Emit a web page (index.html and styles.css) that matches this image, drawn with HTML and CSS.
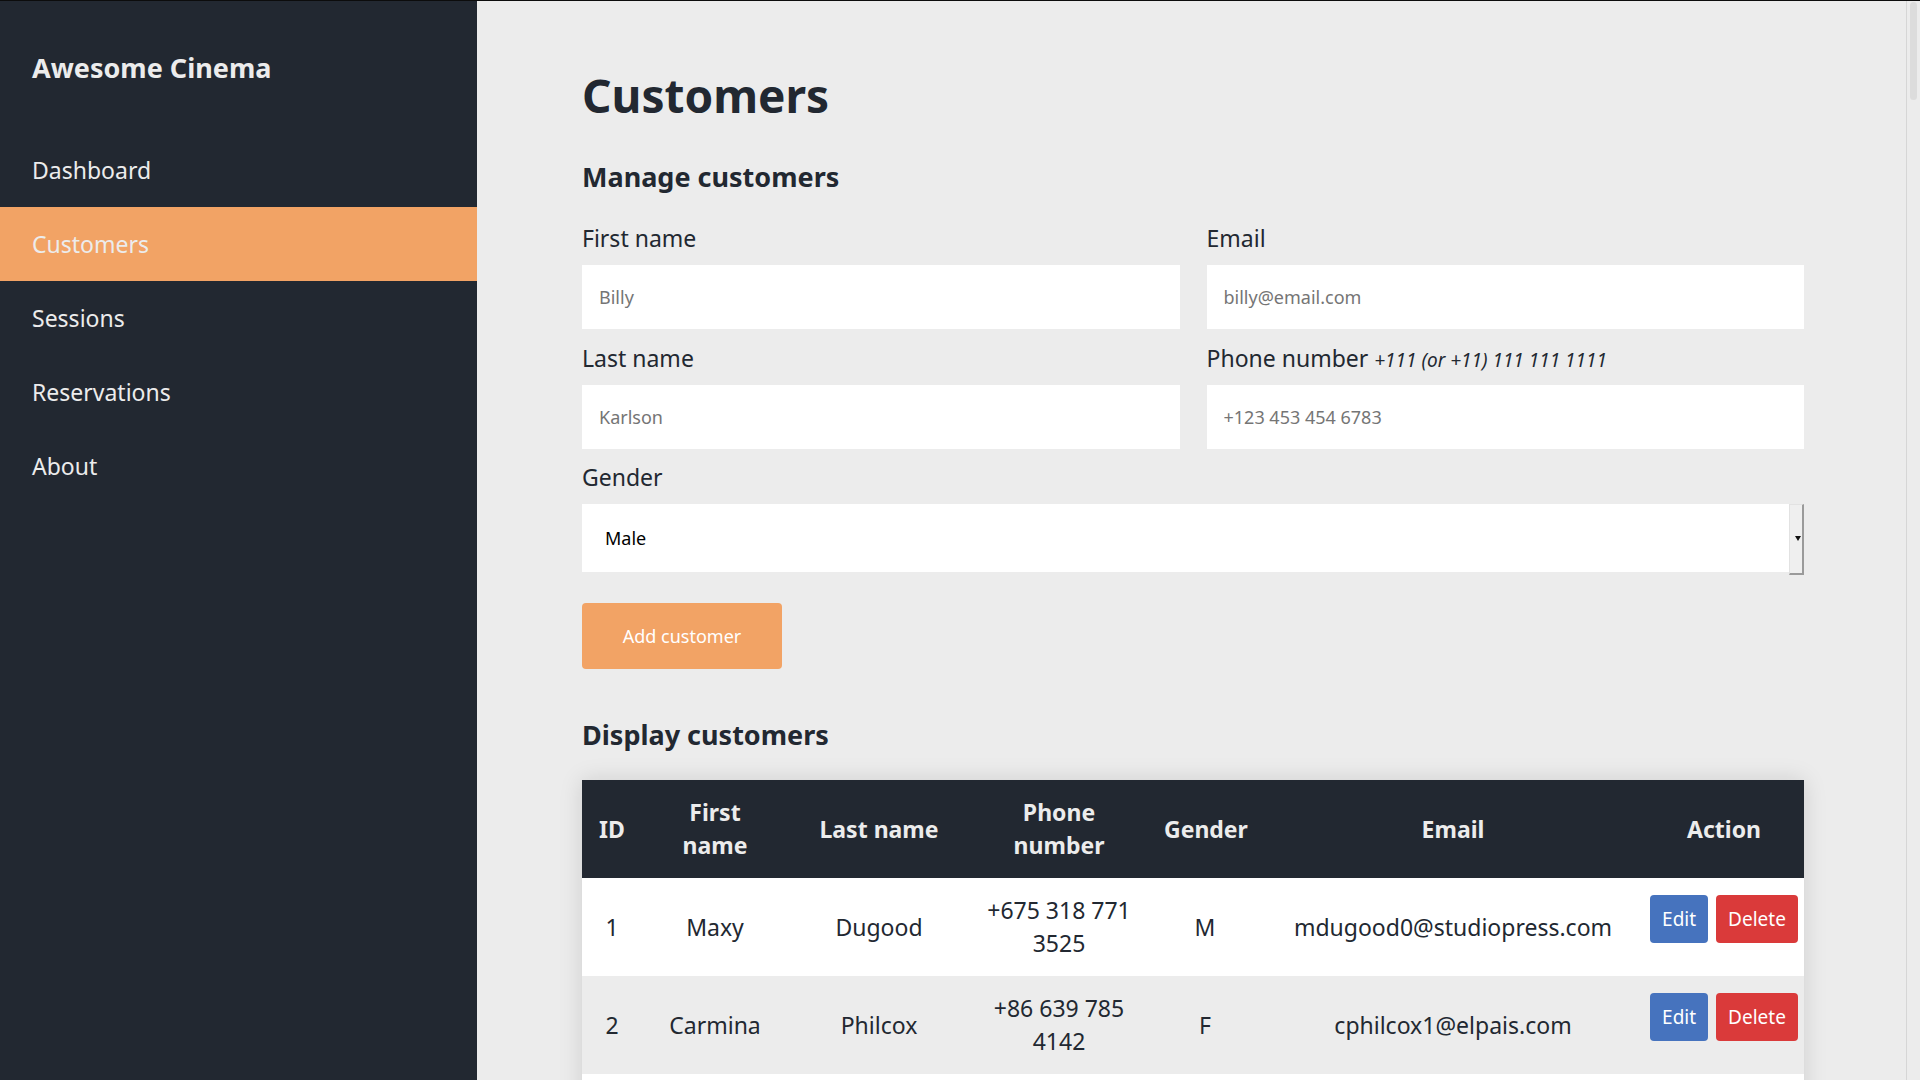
FILE: index.html
```html
<!DOCTYPE html>
<html lang="en">
<head>
<meta charset="utf-8">
<title>Awesome Cinema - Customers</title>
<link rel="stylesheet" href="styles.css">
</head>
<body>
<div class="app">
  <aside class="sidebar">
    <div class="brand">Awesome Cinema</div>
    <nav class="nav">
      <a href="#" class="nav-item">Dashboard</a>
      <a href="#" class="nav-item active">Customers</a>
      <a href="#" class="nav-item">Sessions</a>
      <a href="#" class="nav-item">Reservations</a>
      <a href="#" class="nav-item">About</a>
    </nav>
  </aside>
  <main class="main">
    <h1 class="page-title">Customers</h1>
    <h2 class="section-title">Manage customers</h2>
    <form class="form">
      <div class="field">
        <label class="label" for="fn">First name</label>
        <input class="input" id="fn" type="text" placeholder="Billy">
      </div>
      <div class="field">
        <label class="label" for="em">Email</label>
        <input class="input" id="em" type="email" placeholder="billy@email.com">
      </div>
      <div class="field">
        <label class="label" for="ln">Last name</label>
        <input class="input" id="ln" type="text" placeholder="Karlson">
      </div>
      <div class="field">
        <label class="label" for="ph">Phone number <span class="hint">+111 (or +11) 111 111 1111</span></label>
        <input class="input" id="ph" type="tel" placeholder="+123 453 454 6783">
      </div>
      <div class="field field-wide">
        <label class="label" for="gd">Gender</label>
        <div class="select-wrap">
          <select class="select" id="gd">
            <option>Male</option>
            <option>Female</option>
          </select>
        </div>
      </div>
    </form>
    <button class="btn-primary" type="button">Add customer</button>
    <h2 class="section-title section-display">Display customers</h2>
    <table class="table">
      <colgroup>
        <col class="c-id"><col class="c-first"><col class="c-last"><col class="c-phone"><col class="c-gender"><col class="c-email"><col class="c-action">
      </colgroup>
      <thead>
        <tr><th>ID</th><th>First name</th><th>Last name</th><th>Phone number</th><th>Gender</th><th>Email</th><th>Action</th></tr>
      </thead>
      <tbody>
        <tr><td>1</td><td>Maxy</td><td>Dugood</td><td>+675 318 771 3525</td><td>M</td><td>mdugood0@studiopress.com</td><td class="actions"><div class="btns"><button class="btn btn-edit" type="button">Edit</button><button class="btn btn-delete" type="button">Delete</button></div></td></tr>
        <tr><td>2</td><td>Carmina</td><td>Philcox</td><td>+86 639 785 4142</td><td>F</td><td>cphilcox1@elpais.com</td><td class="actions"><div class="btns"><button class="btn btn-edit" type="button">Edit</button><button class="btn btn-delete" type="button">Delete</button></div></td></tr>
        <tr><td>3</td><td>Rafael</td><td>Ornelas</td><td>+33 512 604 2218</td><td>M</td><td>rornelas2@wired.com</td><td class="actions"><div class="btns"><button class="btn btn-edit" type="button">Edit</button><button class="btn btn-delete" type="button">Delete</button></div></td></tr>
      </tbody>
    </table>
  </main>
  <div class="scrollbar"><div class="thumb"></div></div>
</div>
</body>
</html>
```

FILE: styles.css
```css
* { box-sizing: border-box; }

html, body {
  margin: 0;
  padding: 0;
  height: 100%;
}

body {
  font-family: "Noto Sans", "Open Sans", sans-serif;
  color: #222831;
  background: #ececec;
  overflow: hidden;
}

.app {
  display: flex;
  height: 100vh;
  border-top: 1px solid #0c0c0c;
  overflow: hidden;
}

.sidebar {
  width: 477px;
  flex-shrink: 0;
  background: #222831;
  padding-top: 48px;
}

.brand {
  font-size: 27px;
  line-height: 38px;
  font-weight: 700;
  color: #ececec;
  padding-left: 32px;
  margin-bottom: 46px;
}

.nav {
  display: flex;
  flex-direction: column;
}

.nav-item {
  display: block;
  height: 74px;
  line-height: 74px;
  padding-left: 32px;
  font-size: 23px;
  color: #ececec;
  text-decoration: none;
}

.nav-item.active {
  background: #f2a365;
}

.main {
  flex: 1;
  min-width: 0;
  background: #ececec;
  padding: 66px 102px 0 105px;
  overflow: hidden;
}

.page-title {
  margin: 0 0 36px;
  font-size: 46px;
  line-height: 56px;
  font-weight: 700;
  color: #222831;
}

.section-title {
  margin: 0 0 28px;
  font-size: 27px;
  line-height: 36px;
  font-weight: 700;
  color: #222831;
}

.section-display {
  margin-top: 48px;
  margin-bottom: 27px;
}

.form {
  display: grid;
  grid-template-columns: 1fr 1fr;
  column-gap: 27px;
  row-gap: 14px;
}

.field-wide {
  grid-column: 1 / span 2;
  margin-top: -1px;
}

.label {
  display: block;
  height: 30px;
  font-size: 23px;
  line-height: 30px;
  margin-bottom: 12px;
  color: #222831;
  white-space: nowrap;
}

.hint {
  font-size: 19px;
  line-height: 1;
  font-style: italic;
}

.input {
  display: block;
  width: 100%;
  height: 64px;
  border: none;
  outline: none;
  background: #fff;
  padding: 0 17px;
  font-family: inherit;
  font-size: 18px;
  color: #222831;
}

.input::placeholder {
  color: #757575;
}

.select-wrap {
  position: relative;
}

.select {
  display: block;
  width: 100%;
  height: 68px;
  border: none;
  outline: none;
  background: #fff;
  -webkit-appearance: none;
  appearance: none;
  padding: 0 23px;
  font-family: inherit;
  font-size: 18px;
  color: #000;
}

.select-wrap::after {
  content: "";
  position: absolute;
  top: 0;
  right: 0;
  width: 12px;
  height: 68px;
  background: #efefef;
  border-style: solid;
  border-width: 1px 2px 2px 1px;
  border-color: #e2e2e2 #9a9a9a #9a9a9a #e2e2e2;
}

.select-wrap::before {
  content: "";
  position: absolute;
  z-index: 1;
  right: 3px;
  top: 32px;
  width: 0;
  height: 0;
  border-left: 3.5px solid transparent;
  border-right: 3.5px solid transparent;
  border-top: 5px solid #111;
}

.btn-primary {
  margin-top: 31px;
  display: block;
  width: 200px;
  height: 66px;
  border: none;
  border-radius: 4px;
  background: #f2a365;
  color: #fff;
  font-family: inherit;
  font-size: 18px;
}

.table {
  width: 100%;
  border-collapse: collapse;
  table-layout: fixed;
  box-shadow: 0 0 22px rgba(0, 0, 0, 0.13);
  font-size: 23px;
  line-height: 33px;
}

.c-id { width: 60px; }
.c-first { width: 146px; }
.c-last { width: 182px; }
.c-phone { width: 178px; }
.c-gender { width: 114px; }
.c-email { width: 382px; }
.c-action { width: 160px; }

.table th,
.table td {
  padding: 16px;
  text-align: center;
  vertical-align: middle;
}

.table th {
  background: #222831;
  color: #ececec;
  font-weight: 700;
}

.table tbody tr {
  background: #fff;
}

.table tbody tr:nth-child(even) {
  background: #ececec;
}

.table td {
  color: #222831;
}

.table td.actions {
  vertical-align: top;
  padding: 17px 5px;
}

.btns {
  display: flex;
  justify-content: center;
  gap: 8px;
}

.btn {
  border: none;
  border-radius: 4px;
  height: 48px;
  padding: 0 12px;
  font-family: inherit;
  font-size: 19px;
  color: #fff;
}

.btn-edit {
  background: #4673be;
}

.btn-delete {
  background: #da3a3a;
}

.scrollbar {
  width: 14px;
  flex-shrink: 0;
  background: #ececec;
  border-left: 1px solid #d6d6d6;
  padding: 1px 3px 0 3px;
}

.thumb {
  height: 98px;
  background: #dcdcdc;
  border-radius: 4px;
}
```
